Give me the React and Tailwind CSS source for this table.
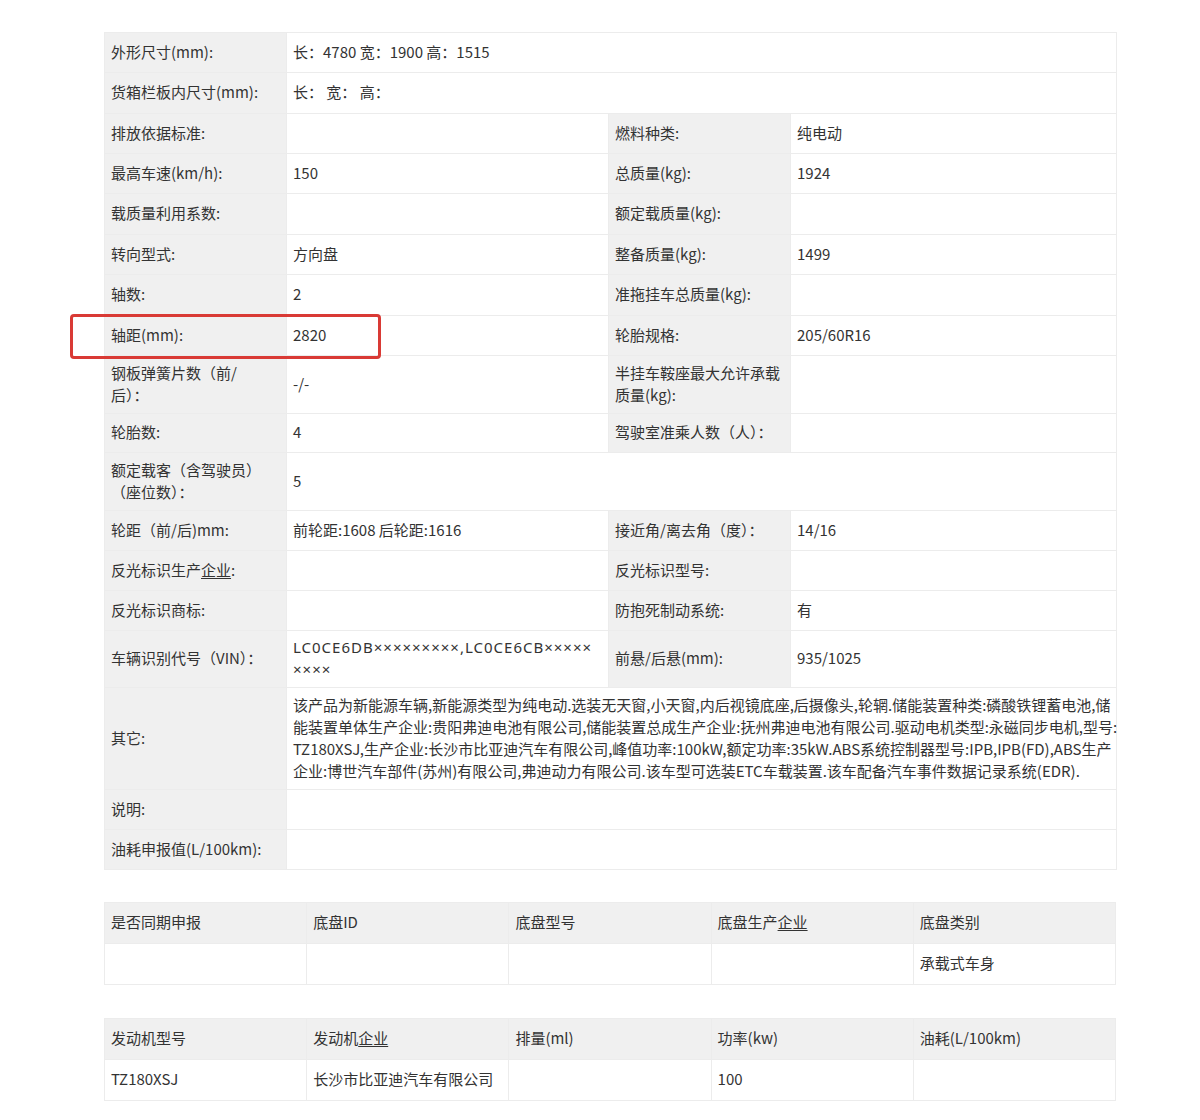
import React from "react";

const font = { fontFamily: '"Noto Sans CJK SC", "Noto Sans", sans-serif' };
const latin = { fontFamily: '"Noto Sans", "Noto Sans CJK SC", sans-serif' };

const U = ({ children }) => <span className="underline underline-offset-2">{children}</span>;

const rows = [
  { h: "h-[40px]", l1: "外形尺寸(mm):", v1: "长：4780 宽：1900 高：1515", wide: true },
  { h: "h-[41px]", l1: "货箱栏板内尺寸(mm):", v1: "长： 宽： 高：", wide: true },
  { h: "h-[40px]", l1: "排放依据标准:", v1: "", l2: "燃料种类:", v2: "纯电动" },
  { h: "h-[40px]", l1: "最高车速(km/h):", v1: "150", l2: "总质量(kg):", v2: "1924" },
  { h: "h-[41px]", l1: "载质量利用系数:", v1: "", l2: "额定载质量(kg):", v2: "" },
  { h: "h-[40px]", l1: "转向型式:", v1: "方向盘", l2: "整备质量(kg):", v2: "1499" },
  { h: "h-[41px]", l1: "轴数:", v1: "2", l2: "准拖挂车总质量(kg):", v2: "" },
  { h: "h-[40px]", l1: "轴距(mm):", v1: "2820", l2: "轮胎规格:", v2: "205/60R16" },
  {
    h: "h-[58px]",
    l1: <>钢板弹簧片数（前/<br />后）：</>,
    v1: "-/-",
    l2: <>半挂车鞍座最大允许承载<br />质量(kg):</>,
    v2: "",
  },
  { h: "h-[39px]", l1: "轮胎数:", v1: "4", l2: "驾驶室准乘人数（人）：", v2: "" },
  { h: "h-[58px]", l1: <>额定载客（含驾驶员）<br />（座位数）：</>, v1: "5", wide: true },
  { h: "h-[40px]", l1: "轮距（前/后)mm:", v1: "前轮距:1608 后轮距:1616", l2: "接近角/离去角（度）：", v2: "14/16" },
  { h: "h-[40px]", l1: <>反光标识生产<U>企业</U>:</>, v1: "", l2: "反光标识型号:", v2: "" },
  { h: "h-[40px]", l1: "反光标识商标:", v1: "", l2: "防抱死制动系统:", v2: "有" },
  {
    h: "h-[57px]",
    l1: "车辆识别代号（VIN）：",
    v1: (
      <span style={latin} className="tracking-[1px]">
        LC0CE6DB×××××××××,LC0CE6CB×××××<br />××××
      </span>
    ),
    l2: "前悬/后悬(mm):",
    v2: "935/1025",
  },
  {
    h: "h-[102px]",
    l1: "其它:",
    v1: (
      <>
        该产品为新能源车辆,新能源类型为纯电动.选装无天窗,小天窗,内后视镜底座,后摄像头,轮辋.储能装置种类:磷酸铁锂蓄电池,储<br />
        能装置单体生产企业:贵阳弗迪电池有限公司,储能装置总成生产企业:抚州弗迪电池有限公司.驱动电机类型:永磁同步电机,型号:<br />
        TZ180XSJ,生产企业:长沙市比亚迪汽车有限公司,峰值功率:100kW,额定功率:35kW.ABS系统控制器型号:IPB,IPB(FD),ABS生产<br />
        企业:博世汽车部件(苏州)有限公司,弗迪动力有限公司.该车型可选装ETC车载装置.该车配备汽车事件数据记录系统(EDR).
      </>
    ),
    wide: true,
  },
  { h: "h-[40px]", l1: "说明:", v1: "", wide: true },
  { h: "h-[40px]", l1: "油耗申报值(L/100km):", v1: "", wide: true },
];

const labelCls = "bg-[#f0f0f0] border border-[#ececec] px-[6px] pt-0 pb-[2px] align-middle text-left";
const valueCls = "bg-white border border-[#ececec] px-[6px] pt-0 pb-[2px] align-middle text-left whitespace-nowrap";

function SubTable({ heads, cells }) {
  return (
    <table className="w-[1012px] table-fixed border-collapse">
      <thead>
        <tr className="h-[41px]">
          {heads.map((h, i) => (
            <th key={i} className="bg-[#f0f0f0] border border-[#ececec] px-[6px] pt-0 pb-[2px] font-normal text-left align-middle">
              {h}
            </th>
          ))}
        </tr>
      </thead>
      <tbody>
        <tr className="h-[41px]">
          {cells.map((c, i) => (
            <td key={i} className="bg-white border border-[#ececec] px-[6px] pt-0 pb-[2px] align-middle">
              {c}
            </td>
          ))}
        </tr>
      </tbody>
    </table>
  );
}

export default function App() {
  return (
    <div className="min-h-[1120px] bg-white pl-[104px] pt-[32px] text-[15px] leading-[22px] text-[#333]" style={font}>
      <div className="relative w-[1012px]">
        <table className="w-[1012px] table-fixed border-collapse">
          <colgroup>
            <col className="w-[182px]" />
            <col className="w-[322px]" />
            <col className="w-[182px]" />
            <col className="w-[326px]" />
          </colgroup>
          <tbody>
            {rows.map((r, i) => (
              <tr key={i} className={r.h}>
                <td className={labelCls}>{r.l1}</td>
                {r.wide ? (
                  <td className={valueCls} colSpan={3}>{r.v1}</td>
                ) : (
                  <>
                    <td className={valueCls}>{r.v1}</td>
                    <td className={labelCls}>{r.l2}</td>
                    <td className={valueCls}>{r.v2}</td>
                  </>
                )}
              </tr>
            ))}
          </tbody>
        </table>

        {/* red highlight around 轴距 row */}
        <div className="absolute left-[-34px] top-[282px] w-[311px] h-[45px] rounded-[4px] border-[3px] border-[#d93a35] pointer-events-none" />
      </div>

      <div className="mt-[32px]">
        <SubTable
          heads={["是否同期申报", "底盘ID", "底盘型号", <>底盘生产<U>企业</U></>, "底盘类别"]}
          cells={["", "", "", "", "承载式车身"]}
        />
      </div>

      <div className="mt-[33px]">
        <SubTable
          heads={["发动机型号", <>发动机<U>企业</U></>, "排量(ml)", "功率(kw)", "油耗(L/100km)"]}
          cells={["TZ180XSJ", "长沙市比亚迪汽车有限公司", "", "100", ""]}
        />
      </div>
    </div>
  );
}
